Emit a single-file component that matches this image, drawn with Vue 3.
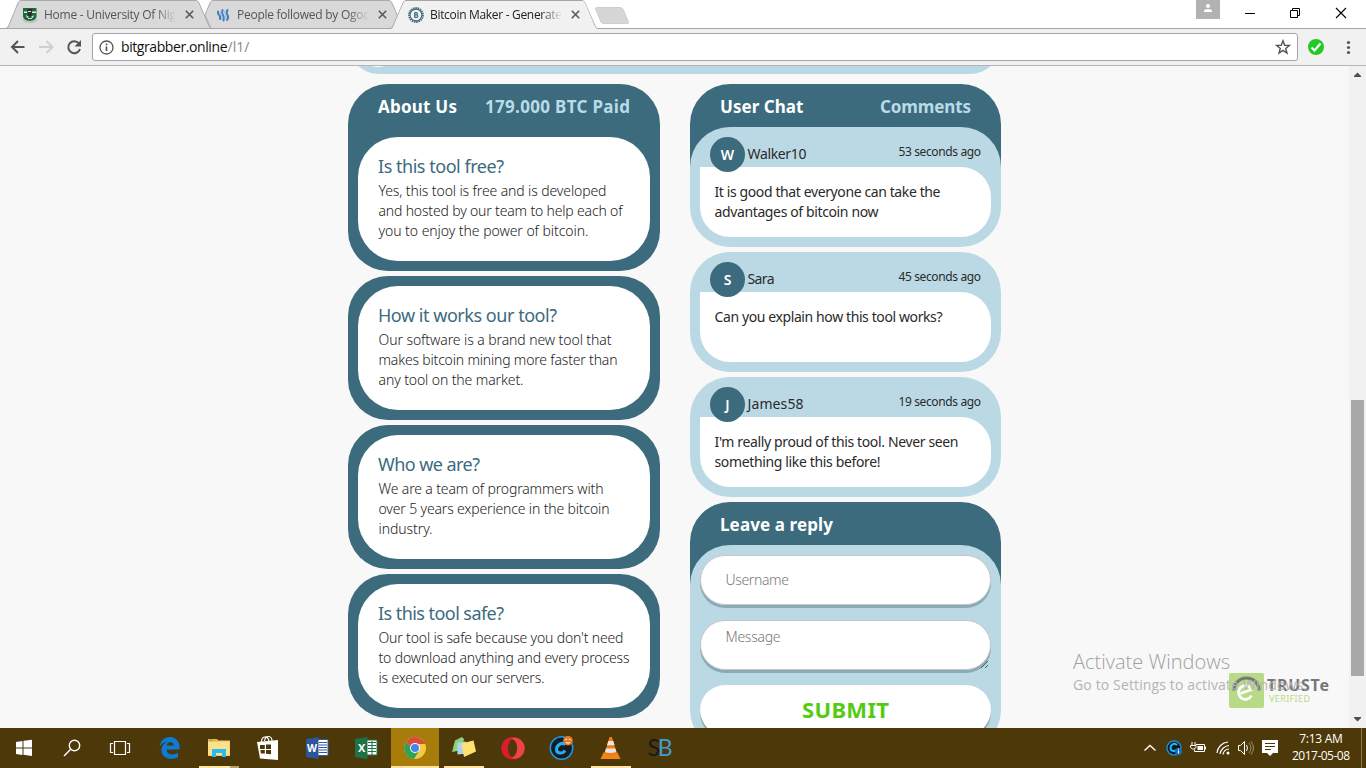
<script setup>
// Spreads a line of text over the given width with letter spacing.
const vFit = {
  mounted(el, { value }) {
    const width = el.getBoundingClientRect().width
    const gaps = Math.max(1, el.textContent.length - 1)
    el.style.letterSpacing = `${(value - width) / gaps}px`
    el.style.marginRight = `${-(value - width) / gaps}px`
  },
}

const tabs = [
  { title: 'Home - University Of Nig', icon: 'crest' },
  { title: 'People followed by Ogoc', icon: 'waves' },
  { title: 'Bitcoin Maker - Generate', icon: 'coin' },
]

const about = [
  { title: 'Is this tool free?', w: 126, lines: [['Yes, this tool is free and is developed', 228], ['and hosted by our team to help each of', 244], ['you to enjoy the power of bitcoin.', 210]] },
  { title: 'How it works our tool?', w: 179, lines: [['Our software is a brand new tool that', 233], ['makes bitcoin mining more faster than', 239], ['any tool on the market.', 145]] },
  { title: 'Who we are?', w: 102, lines: [['We are a team of programmers with', 225], ['over 5 years experience in the bitcoin', 231], ['industry.', 54]] },
  { title: 'Is this tool safe?', w: 126, lines: [["Our tool is safe because you don't need", 245], ['to download anything and every process', 251], ['is executed on our servers.', 166]] },
]

const comments = [
  { name: 'Walker10', w: 59, ago: '53 seconds ago', lines: [['It is good that everyone can take the', 226], ['advantages of bitcoin now', 164]] },
  { name: 'Sara', w: 27, ago: '45 seconds ago', lines: [['Can you explain how this tool works?', 228]] },
  { name: 'James58', w: 56, ago: '19 seconds ago', lines: [["I'm really proud of this tool. Never seen", 244], ['something like this before!', 166]] },
]
</script>

<template>
  <div class="screen">
    <header class="strip">
      <svg class="shapes" width="640" height="29" viewBox="0 0 640 29">
        <path d="M6 28.5 Q8 28 9 25 L18 3 Q19 .5 21 .5 H196 Q198 .5 199 3 L209 26 Q210 28.5 212 28.5Z" fill="#d9d9d9" stroke="#aaa" />
        <path d="M211 28.5 L205 15 L210 3 Q211 .5 213 .5 H389 Q391 .5 392 3 L403 28.5Z" fill="#d9d9d9" stroke="#aaa" />
        <path d="M0 28.5 H390 Q392.500 28.500 393.500 25 L403 3 Q404 .5 406 .5 H582 Q584 .5 585 3 L595 26 Q596 28.500 598 28.500 H640" fill="none" stroke="#a6a6a6" />
        <path d="M391 29 Q393.500 28 394 25 L403.500 3 Q404.500 1 406 1 H582 Q584 1 585 3 L594.500 26 Q596 29 598 29Z" fill="#f1f1f1" />
        <path d="M596.500 7.500 H620 Q622 7.500 623 9 L628.500 22 Q629 23.500 627 23.500 H604 Q602 23.500 601 22 L595.500 9 Q595 7.500 596.500 7.500Z" fill="#d6d6d6" stroke="#c6c6c6" stroke-width=".8" />
      </svg>
      <div v-for="t in tabs" :key="t.icon" class="tab" :class="{ active: t.icon === 'coin' }">
        <svg v-if="t.icon === 'crest'" width="16" height="16" viewBox="0 0 16 16">
          <path d="M1 12q7 5 14 0v2q-7 4-14 0Z" fill="#b9bdba" /><path d="M1 1h13.500v8q0 4.500-6.700 5Q1 13.500 1 9Z" fill="#1c6b3d" /><path d="M2 4.500h3v1.500H2zM10 4.500h4v1.500h-4zM4 8l3 2-2 1zM12 8l-3 2 2 1z" fill="#e8ece8" /><path d="M5 2h5.500l-1 3 1 3-3 2-2-2 1-3z" fill="#2a2f2c" /><path d="M6 4h3v1H6zM6 11h4v1H6z" fill="#cfd6d0" />
        </svg>
        <svg v-else-if="t.icon === 'waves'" width="16" height="16" viewBox="0 0 16 16" fill="none" stroke-linecap="round">
          <path d="M3 4.500q-.5 2.500 1 3.500t1 4M7.500 3q-1 3 .5 5t.5 5.500M12.500 3q-1.500 3 0 5t-.5 5" stroke="#4a7db8" stroke-width="2" /><path d="M5 4.500q-.2 2 1.200 3.500t.3 4M10 3.500q-.5 2.500 .7 4.500t.2 4" stroke="#8dbbe8" stroke-width="1.200" />
        </svg>
        <svg v-else width="16" height="16" viewBox="0 0 16 16" fill="none" stroke="#3c6b7d">
          <circle cx="8" cy="8" r="7" stroke-width="1.800" stroke-dasharray="1.500 .8" /><circle cx="8" cy="8" r="5.900" stroke-width="1.100" /><path d="M6.700 5.500v5M6.700 5.700H8.300a1 1 0 0 1 0 2.200H6.700M6.700 8H8.700a1.100 1.100 0 0 1 0 2.300H6.700" stroke-width="1.200" />
        </svg>
        <span class="tabname"><span v-fit="132" class="fit">{{ t.title }}</span></span>
        <svg class="x" width="9" height="9" viewBox="0 0 9 9"><path d="M.8.8 8.200 8.200M8.200.8.8 8.200" stroke="#5a5a5a" stroke-width="1.600" /></svg>
      </div>
      <div class="winbtns">
        <svg width="24" height="19" viewBox="0 0 24 19"><path fill="#b2b2b2" d="M0 0h24v19H0z" /><circle cx="12" cy="6" r="2.100" fill="#fff" /><path d="M8 12v-1q0-2 4-2t4 2v1z" fill="#fff" /></svg>
        <svg width="146" height="26" viewBox="0 0 146 26" fill="none" stroke="#000">
          <path d="M25 13.500h10" /><path d="M70.500 10.500h7v7h-7zM72.500 10.500v-2h7v7h-2" /><path d="M116 8l10 10M126 8l-10 10" stroke-width="1.100" />
        </svg>
      </div>
    </header>

    <div class="toolbar">
      <svg class="nav" width="92" height="36" viewBox="0 0 92 36" fill="none" stroke-width="2">
        <path d="M24.500 18H12.500M18 12l-6 6 6 6" stroke="#555" /><path d="M39 18H52M46.500 12l6 6-6 6" stroke="#cfcfcf" />
        <path d="M79 14.500A6 6 0 1 0 80 20" stroke="#555" /><path d="M81 11v6.500h-6.500z" fill="#555" />
      </svg>
      <div class="address">
        <svg width="15" height="15" viewBox="0 0 15 15" fill="none" stroke="#555"><circle cx="7.500" cy="7.500" r="6.500" stroke-width="1.300" /><path d="M7.500 6.500V11M7.500 3.500v1.800" stroke-width="1.700" /></svg>
        <span class="url"><span v-fit="106.500" class="fit">bitgrabber.online</span><span v-fit="22" class="fit path">/l1/</span></span>
        <svg class="star" width="16" height="16" viewBox="0 0 16 16"><path d="M8 1.700 9.700 6.200l4.800.2-3.800 3 1.300 4.700L8 11.400l-4 2.700 1.300-4.700-3.800-3 4.800-.2z" fill="none" stroke="#555" stroke-width="1.400" /></svg>
      </div>
      <svg class="ext" width="68" height="36" viewBox="0 0 68 36"><circle cx="18" cy="18" r="8" fill="#23ca27" /><path d="M13.500 18.500l3 3L22.500 14.500" fill="none" stroke="#fff" stroke-width="2.200" /><g fill="#555"><circle cx="50.500" cy="13.500" r="1.600" /><circle cx="50.500" cy="18.500" r="1.600" /><circle cx="50.500" cy="23.500" r="1.600" /></g></svg>
    </div>

    <main class="view">
      <div class="page">
        <div class="banner"><i></i></div>
        <div class="cols">
          <section class="left">
            <article v-for="(a, i) in about" :key="a.title" class="card">
              <div v-if="i === 0" class="head lefthead"><span v-fit="79" class="fit">About Us</span><b v-fit="145" class="fit">179.000 BTC Paid</b></div>
              <div class="inner">
                <h3><span v-fit="a.w" class="fit">{{ a.title }}</span></h3>
                <p v-for="l in a.lines" :key="l[0]"><span v-fit="l[1]" class="fit">{{ l[0] }}</span></p>
              </div>
            </article>
          </section>
          <section class="right">
            <div class="block">
              <div class="head"><span v-fit="83.500" class="fit">User Chat</span><b v-fit="91" class="fit">Comments</b></div>
              <article v-for="c in comments" :key="c.name" class="chat">
                <div class="who">
                  <span class="avatar">{{ c.name[0] }}</span>
                  <span class="name"><span v-fit="c.w" class="fit">{{ c.name }}</span></span>
                  <span class="ago"><span v-fit="82.500" class="fit">{{ c.ago }}</span></span>
                </div>
                <div class="msg"><p v-for="l in c.lines" :key="l[0]"><span v-fit="l[1]" class="fit">{{ l[0] }}</span></p></div>
              </article>
            </div>
            <div class="block reply">
              <div class="head"><span v-fit="113" class="fit">Leave a reply</span></div>
              <div class="form">
                <div class="field"><span v-fit="63.500" class="fit">Username</span></div>
                <div class="field area"><span v-fit="55" class="fit">Message</span>
                  <svg class="grip" width="9" height="9" viewBox="0 0 9 9"><path d="M1 8 8 1M5 8l3-3" stroke="#555" fill="none" /></svg>
                </div>
                <div class="submit"><span v-fit="87" class="fit">SUBMIT</span></div>
              </div>
            </div>
          </section>
        </div>
        <div class="seal">
          <svg width="36" height="36" viewBox="0 0 36 36"><rect width="35" height="35" rx="2" fill="#b7da87" /><path d="M5 17.500A12.500 12.500 0 0 1 30 17.500" fill="none" stroke="#777" stroke-width="3.200" /><path d="M11.500 20.500 22.500 16.500A6.800 6.800 0 1 0 22.500 22.500" fill="none" stroke="#fff" stroke-width="2.800" /></svg>
          <div><div class="truste"><span v-fit="62" class="fit">TRUSTe</span></div><div class="verified"><span v-fit="41" class="fit">VERIFIED</span></div></div>
        </div>
        <div class="watermark"><div class="w1"><span v-fit="157" class="fit">Activate Windows</span></div><div class="w2"><span v-fit="234" class="fit">Go to Settings to activate Windows.</span></div></div>
      </div>
      <div class="scroll"><svg width="17" height="17" viewBox="0 0 17 17"><path d="M5 11h7v-1L8.500 6.500 5 10z" fill="#505050" /></svg><i></i><svg width="17" height="17" viewBox="0 0 17 17"><path d="M5 6h7v1L8.500 10.500 5 7z" fill="#505050" /></svg></div>
    </main>

    <footer class="taskbar">
      <div class="apps">
        <div class="app"><svg width="48" height="38" viewBox="0 0 48 38" fill="#fff"><path d="M16 14l6.500-1v6.500H16zM23.500 12.800 32 11.800v7.700h-8.500zM16 20.500h6.500V27L16 26zM23.500 20.500H32V28l-8.500-1.200z" /></svg></div>
        <div class="app"><svg width="48" height="38" viewBox="0 0 48 38" fill="none" stroke="#fff" stroke-width="1.400"><circle cx="26.500" cy="17.500" r="5.200" /><path d="M22.700 21.300 16 28" /></svg></div>
        <div class="app"><svg width="48" height="38" viewBox="0 0 48 38" fill="none" stroke="#fff" stroke-width="1.200"><path d="M18.500 13.500h11v13h-11zM17 15.500h-2.500v9H17M31 15.500h2.500v9H31" /></svg></div>
        <div class="app edge"><svg width="48" height="38" viewBox="0 0 48 38"><path d="M13.500 19C15 5.500 33 6 33.500 18.500v3H20.500c.3 5.500 7 6.200 11.500 3.300v4.500c-7.500 3.500-16.500 1-16.500-7 0-4.300 2.600-7 6-8.500-4 .2-6.500 2.200-8 5.200Zm7-1.500h7.300c-.3-4.800-6.300-4.800-7.300 0Z" fill="#0c7bd7" fill-rule="evenodd" /></svg></div>
        <div class="app"><svg width="48" height="38" viewBox="0 0 48 38"><path d="M13 11h9l1 1.500h12V28H13z" fill="#f3cd6c" /><path d="M13 11h9v2.500h-9z" fill="#edb52f" /><path d="M15 11.500h2v1.500h-2z" fill="#27bdf2" /><path d="M13 14h21.500v13H13z" fill="#fde08a" /><path d="M17 29v-8h14v8h-4v-4h-6v4z" fill="#27bdf2" /></svg><u class="partial"></u></div>
        <div class="app"><svg width="48" height="38" viewBox="0 0 48 38"><path d="M13 14l21-2v20l-18-1.500z" fill="#fff" /><path d="M17.500 14c0-6 6-7 7.500-1M20.500 13c1-6.500 7.500-5.500 7.500 0" fill="none" stroke="#fff" stroke-width="1.200" /><path d="M16 17h4.800v4H16zM22 16.500h5V21h-5zM16.500 22h4.300v3.500h-4zM22 22h5v4.300l-5-.5z" fill="#4d380a" /></svg></div>
        <div class="app"><svg width="48" height="38" viewBox="0 0 48 38"><path d="M24 11.500h11v16H24z" fill="#fff" stroke="#3159a4" /><path d="M26 14.500h8M26 17h8M26 19.500h8M26 22h8M26 24.500h8" stroke="#3159a4" /><path d="M13 11l12.500-2v22L13 29z" fill="#2c5699" /><text x="14" y="24" class="office" textLength="10" lengthAdjust="spacingAndGlyphs">W</text></svg></div>
        <div class="app"><svg width="48" height="38" viewBox="0 0 48 38"><path d="M24 12h11v15H24z" fill="#fff" stroke="#1e7346" /><path d="M26 14.500h8M26 17.500h8M26 20.500h8M26 23.500h8M30 13v14" stroke="#1e7346" /><path d="M13 11l12.500-2v22L13 29z" fill="#1e7346" /><text x="16" y="24" class="office">X</text></svg></div>
        <div class="app chrome"><svg width="48" height="38" viewBox="0 0 48 38"><circle cx="24" cy="20" r="11" fill="#f5ca42" /><path d="M24 20 14.500 14.500A11 11 0 0 1 33.500 14.500L34.200 16H24Z" fill="#db4c3f" /><path d="M24 20 14.500 14.500A11 11 0 0 0 23 31L28 23Z" fill="#30a357" /><circle cx="24" cy="20" r="5" fill="#fff" /><circle cx="24" cy="20" r="4" fill="#4386ee" /></svg><u></u></div>
        <div class="app"><svg width="48" height="38" viewBox="0 0 48 38"><path d="M15 12.500l7-3.500 2 2-2 11-10 2z" fill="#8fd07f" /><path d="M17 15l9-1.500 2 12-10.500 1z" fill="#aed3f0" /><path d="M21.500 15.500l12-3 2.500 11-12 5.500z" fill="#fbe36d" /></svg><u class="narrow"></u></div>
        <div class="app"><svg width="48" height="38" viewBox="0 0 48 38"><path d="M23.500 9a11 11 0 0 0 0 22.500 11 11 0 0 0 0-22.500Zm0 2.500c6 1.500 6 16 0 17.500-6-1.500-6-16 0-17.500Z" fill="#d91c2e" fill-rule="evenodd" /><path d="M25 9.500a10.500 10.500 0 0 1 0 21.500l-2-1.500c7-2 7-17 0-18.500Z" fill="#ef4444" /></svg></div>
        <div class="app"><svg width="48" height="38" viewBox="0 0 48 38"><circle cx="23.500" cy="20" r="11.200" fill="#171c20" stroke="#179be9" stroke-width="1.500" /><path d="M27.500 16.500c-4-3-9 1-9 5s6 5 8.500 1" fill="none" stroke="#25adf5" stroke-width="3" /><circle cx="30" cy="12.700" r="4.800" fill="#e77e29" /><path d="M27.500 11.500h1.500M31 11.500h1.500M28 14.500q2 1.500 4 0" stroke="#fff" fill="none" /></svg></div>
        <div class="app"><svg width="48" height="38" viewBox="0 0 48 38"><path d="M16.500 24.500h14l3 6.500H13.500z" fill="#ef8515" /><path d="M22.500 9h2.500l5 17q-6.500 3-12.500 0z" fill="#f47b13" /><path d="M21.300 13h5l1.300 4.200h-7.600zM18.900 20.500h9.500l1 3.500q-6 2-11.500 0z" fill="#e6e6ea" /></svg><u class="narrow"></u></div>
        <div class="app sb"><span v-fit="25" class="fit">S<b>B</b></span></div>
      </div>
      <svg class="tray" width="144" height="40" viewBox="1140 0 144 40" fill="none" stroke="#fff">
        <path d="M1144.500 22.500l5.500-5 5.500 5" stroke-width="1.300" />
        <circle cx="1174" cy="20" r="7" fill="#0b1c2a" stroke="#168ecb" stroke-width="1.500" /><path d="M1177 17c-3-3-6.500 0-6.500 3s4 4 6 2" stroke="#2bbaf4" stroke-width="2" /><circle cx="1178.500" cy="23.500" r="3.500" fill="#176abf" stroke="none" /><path d="M1178.500 22.500v3M1178.500 20.500v1" stroke-width="1.200" />
        <path d="M1196 16.500h8.500v7h-10v-2M1205.500 18.500v3M1192 14v3M1195 14v3M1190.500 17.500h5.500v2l-2 1.500h-1.500l-2-1.500z" /><path d="M1197.500 18h5.500v4h-5.500z" fill="#fff" stroke="none" />
        <path d="M1217 25a12 12 0 0 1 11-11M1220 26a10 10 0 0 1 9-8.500M1223 26.500a6 6 0 0 1 6-5.500" stroke-width="1.200" /><circle cx="1228" cy="25" r="1.500" fill="#fff" stroke="none" />
        <path d="M1238.500 17.500h2l4-4v13l-4-4h-2z" /><path d="M1246.500 17q2 3 0 6" /><path d="M1249 15q4 5 0 10M1251 13.500q5 6.500 0 13" stroke="#9c8f70" />
        <path d="M1262 12h16v13h-5l-3 3-3-3h-5z" fill="#fff" stroke="none" /><path d="M1265 15.500h10M1265 18.500h10M1265 21.500h6" stroke="#4d380a" />
      </svg>
      <div class="clock"><div><span v-fit="43.500" class="fit">7:13 AM</span></div><div><span v-fit="58" class="fit">2017-05-08</span></div></div>
      <i class="peek"></i>
    </footer>
  </div>
</template>

<style>
body { margin: 0; overflow: hidden; }
</style>

<style scoped>
* { box-sizing: border-box; }
.screen { width: 1366px; height: 768px; overflow: hidden; display: flex; flex-direction: column; background: #f8f8f8; font-family: "Noto Sans", "Open Sans", sans-serif; }
svg { display: block; flex: none; }
.fit { display: inline-block; white-space: pre; }
p, h3 { margin: 0; }

.strip { position: relative; height: 29px; display: flex; background: #fff; padding-left: 22px; border-bottom: 1px solid #a6a6a6; flex: none; }
.shapes { position: absolute; left: 0; top: 0; }
.tab { position: relative; width: 193px; display: flex; align-items: center; height: 29px; font: 12px/20px "Open Sans", sans-serif; color: #555; flex: none; }
.tab.active { color: #222; }
.tabname { margin-left: 6px; width: 132px; overflow: hidden; mask-image: linear-gradient(90deg, #000 84%, transparent); height: 20px; }
.x { margin-left: 8.500px; }
.winbtns { display: flex; margin-left: auto; height: 28px; }

.toolbar { height: 37px; background: #f1f1f1; border-bottom: 1px solid #b6b4b6; display: flex; flex: none; }
.address { width: 1206px; height: 28px; margin-top: 4px; background: #fff; border: 1px solid #a5a5a5; border-radius: 3px; display: flex; align-items: center; padding: 0 6px; }
.url { margin-left: 7px; font: 14px/20px "Open Sans", sans-serif; color: #111; }
.path { color: #888; }
.star { margin-left: auto; }

.view { height: 662px; display: flex; flex: none; overflow: hidden; }
.page { position: relative; width: 1349px; height: 662px; overflow: hidden; background: #f8f8f8; display: flex; flex-direction: column; align-items: center; }
.banner { width: 653px; height: 50px; margin-top: -42px; background: #bbd9e4; border-radius: 0 0 31px 31px; flex: none; }
.banner i { display: block; margin: 0 10px; height: 43px; background: #fff; border-radius: 0 0 34px 34px; width: 40px; }
.cols { width: 653px; margin-top: 10px; display: flex; justify-content: space-between; }
.left { width: 312px; display: flex; flex-direction: column; gap: 5px; }
.card { background: #3c6b7d; border-radius: 40px; padding: 10px; flex: none; }
.card:first-child { padding-top: 0; }
.head { height: 43px; padding: 0 30px; display: flex; justify-content: space-between; font-size: 17px; line-height: 46px; font-weight: 700; color: #fff; }
.head b { color: #b9dbe8; font-weight: 700; }
.lefthead { height: 53px; padding: 0 20px; }
.inner { height: 124px; background: #fff; border-radius: 40px; padding: 18px 20px; }
.inner h3 { font-size: 18px; line-height: 23px; font-weight: 400; color: #3c6b7d; height: 26px; }
.inner p { font-size: 14px; line-height: 20px; height: 20px; font-weight: 300; color: #222; padding-left: .5px; }
.right { width: 311px; display: flex; flex-direction: column; gap: 5px; }
.block { background: linear-gradient(#3c6b7d 83px, transparent 83px); border-radius: 40px 40px 0 0; display: flex; flex-direction: column; flex: none; }
.chat { height: 120px; background: #bbd9e4; border-radius: 40px; padding: 0 10px 10px; margin-bottom: 5px; flex: none; }
.chat:last-child { margin-bottom: 0; }
.who { height: 40px; display: flex; padding: 10px 10px 0; color: #2a2a2a; }
.avatar { position: relative; width: 35px; height: 35px; border-radius: 50%; background: #3c6b7d; color: #fff; font-size: 14px; font-weight: 600; line-height: 36px; text-align: center; flex: none; }
.name { font-size: 14px; line-height: 34px; margin-left: 2.500px; }
.ago { font-size: 12px; line-height: 30px; margin-left: auto; }
.msg { height: 70px; background: #fff; border-radius: 0 30px 30px 30px; padding: 15px 14.500px; font-size: 14px; line-height: 20px; color: #2a2a2a; }
.msg p { height: 20px; }
.form { height: 205px; background: #bbd9e4; border-radius: 40px; padding: 10px; display: flex; flex-direction: column; gap: 15px; }
.field { height: 50px; background: #fff; border: 1px solid #c6c6c6; border-radius: 25px; box-shadow: 0 3px 0 #8aaab5; padding-left: 24.500px; font-size: 14px; line-height: 48px; font-weight: 300; color: #777; flex: none; }
.area { position: relative; line-height: 32px; }
.grip { position: absolute; right: 1px; bottom: 0; }
.submit { height: 50px; background: #fff; border-radius: 25px; box-shadow: 0 3px 0 #8aaab5; text-align: center; font-size: 22px; font-weight: 700; line-height: 48px; color: #54cb12; flex: none; }
.seal { position: absolute; left: 1229px; top: 607px; display: flex; gap: 2px; }
.truste { font-size: 16px; font-weight: 700; line-height: 20px; color: #777; height: 18px; padding-top: 2px; }
.verified { font-size: 9px; line-height: 15px; color: #b7da87; padding-left: 2px; }
.watermark { position: absolute; left: 1073px; top: 582px; color: #b4b4b4; font-family: "Open Sans", sans-serif; }
.w1 { font-size: 20px; line-height: 28px; height: 27px; font-weight: 300; color: #a0a0a0; }
.w2 { font-size: 14px; line-height: 20px; }
.scroll { width: 17px; height: 662px; background: #f1f1f1; display: flex; flex-direction: column; }
.scroll i { width: 13px; height: 276px; margin: 317px 2px auto; background: #a8a8a8; }

.taskbar { position: relative; height: 40px; background: #4d380a; display: flex; flex: none; color: #fff; }
.apps { display: flex; gap: 1px; width: 1140px; }
.app { position: relative; width: 48px; height: 40px; flex: none; }
.app:nth-child(-n+2) { margin-right: -1px; }
.edge { margin-left: 1px; }
.app u { position: absolute; left: 0; right: 0; bottom: 0; height: 2px; background: #ffe3a0; }
.app .narrow { left: 4px; right: 4px; }
.app .partial { left: 4px; right: 4px; background: linear-gradient(90deg, #ffe3a0 31px, #b8a271 31px); }
.chrome { background: #a87c0b; }
.office { font: 700 11px "Open Sans", sans-serif; fill: #fff; }
.sb { font: 23px/39px Lato, sans-serif; text-align: center; color: #17191c; }
.sb b { font-weight: 400; color: #439bd0; }
.clock { width: 74px; text-align: center; font: 12px/17px "Open Sans", sans-serif; padding-top: 2px; }
.peek { width: 1px; height: 40px; background: #8b7b56; margin-left: 3px; }
</style>
